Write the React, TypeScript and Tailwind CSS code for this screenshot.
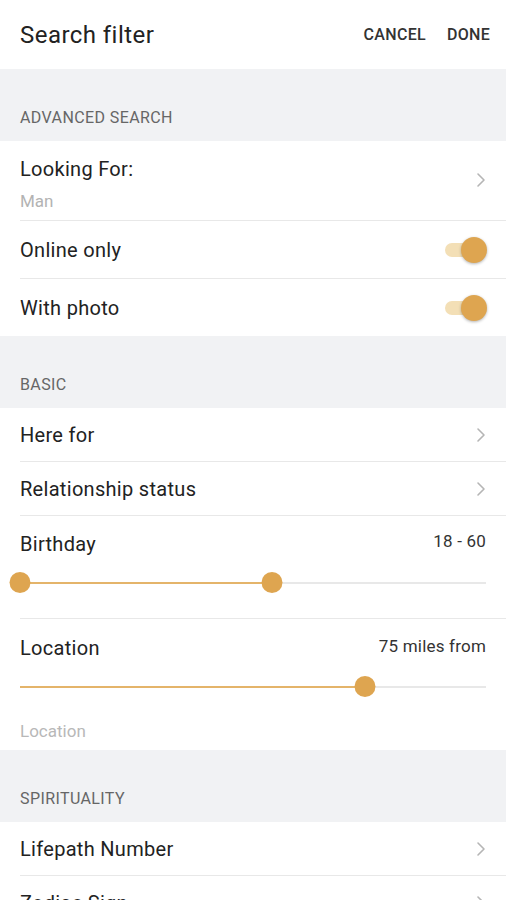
import React from "react";

const Chevron = () => (
  <svg width="10" height="16" viewBox="0 0 10 16" className="shrink-0">
    <path d="M2 2 L8 8 L2 14" fill="none" stroke="#b5b5b5" strokeWidth="1.6" strokeLinecap="round" strokeLinejoin="round" />
  </svg>
);

const Toggle = () => (
  <div className="relative h-[26px] w-[46px] shrink-0">
    <div className="absolute left-[2px] top-[6px] h-[14px] w-[38px] rounded-full bg-[#f3dfb6]" />
    <div className="absolute right-[2px] top-0 h-[26px] w-[26px] rounded-full bg-[#dea550] shadow-[0_1px_3px_rgba(0,0,0,0.3)]" />
  </div>
);

const SectionHeader = ({ title }: { title: string }) => (
  <div className="flex h-[72px] items-end bg-[#f1f2f4] px-5 pb-[13px] text-[16px] leading-[20px] tracking-[0.4px] text-[#666]">
    {title}
  </div>
);

const Divider = () => <div className="ml-5 h-px bg-[#e8e8e8]" />;

const label = "text-[20px] leading-[28px] tracking-[0.3px] text-[#222]";

const NavRow = ({ text }: { text: string }) => (
  <div className="flex h-[53px] items-center justify-between pl-5 pr-5">
    <span className={label}>{text}</span>
    <Chevron />
  </div>
);

const ToggleRow = ({ text }: { text: string }) => (
  <div className="flex h-[57px] items-center justify-between pl-5 pr-[17px]">
    <span className={label}>{text}</span>
    <Toggle />
  </div>
);

const Slider = ({ from, to }: { from?: number; to: number }) => (
  <div className="px-5">
    <div className="relative h-[22px]">
      <div className="absolute left-0 right-0 top-[10px] h-[2px] bg-[#e8e8e8]" />
      <div
        className="absolute top-[10px] h-[2px] bg-[#e4b46a]"
        style={{ left: from ?? 0, width: to - (from ?? 0) }}
      />
      {from !== undefined && (
        <div className="absolute top-0 h-[21px] w-[21px] -translate-x-1/2 rounded-full bg-[#dea550]" style={{ left: from }} />
      )}
      <div className="absolute top-0 h-[21px] w-[21px] -translate-x-1/2 rounded-full bg-[#dea550]" style={{ left: to }} />
    </div>
  </div>
);

export default function App() {
  return (
    <div className="h-[900px] w-[506px] overflow-hidden bg-white font-['Roboto',sans-serif]">
      <div className="flex h-[69px] items-center justify-between pl-5 pr-4">
        <span className="text-[24px] tracking-[0.45px] text-[#222]">Search filter</span>
        <div className="flex gap-[21px] text-[16px] font-medium tracking-[0.3px] text-[#333]">
          <span>CANCEL</span>
          <span>DONE</span>
        </div>
      </div>

      <SectionHeader title="ADVANCED SEARCH" />
      <div className="flex h-[79px] items-start justify-between pl-5 pr-5 pt-[14px]">
        <div className="flex flex-col">
          <span className={label}>Looking For:</span>
          <span className="mt-[8px] text-[17px] leading-[20px] text-[#b3b3b3]">Man</span>
        </div>
        <div className="mt-[17px]">
          <Chevron />
        </div>
      </div>
      <Divider />
      <ToggleRow text="Online only" />
      <Divider />
      <ToggleRow text="With photo" />

      <SectionHeader title="BASIC" />
      <NavRow text="Here for" />
      <Divider />
      <NavRow text="Relationship status" />
      <Divider />
      <div className="h-[102px] pt-[14px]">
        <div className="flex items-center justify-between px-5">
          <span className={label}>Birthday</span>
          <span className="-mt-[4px] text-[17px] tracking-[0.2px] text-[#333]">18 - 60</span>
        </div>
        <div className="mt-[14px]">
          <Slider from={0} to={252} />
        </div>
      </div>
      <Divider />
      <div className="h-[131px] pt-[15px]">
        <div className="flex items-center justify-between px-5">
          <span className={label}>Location</span>
          <span className="-mt-[2px] text-[17px] tracking-[0.2px] text-[#333]">75 miles from</span>
        </div>
        <div className="mt-[14px]">
          <Slider to={345} />
        </div>
        <div className="mt-[21px] px-5 text-[17px] leading-[24px] text-[#b8b8b8]">Location</div>
      </div>

      <SectionHeader title="SPIRITUALITY" />
      <NavRow text="Lifepath Number" />
      <Divider />
      <NavRow text="Zodiac Sign" />
    </div>
  );
}
